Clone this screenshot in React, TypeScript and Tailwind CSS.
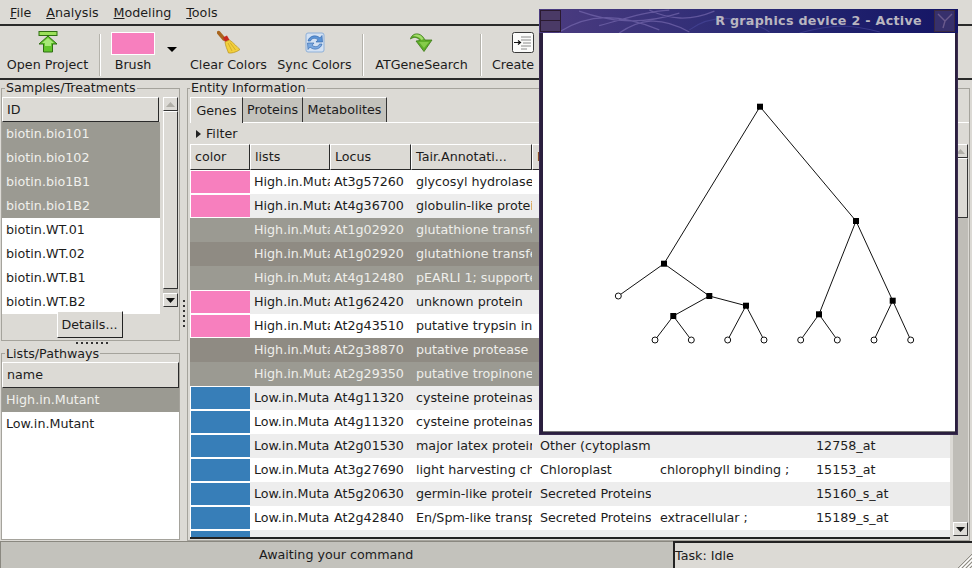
const samples = [
  { id: 'biotin.bio101', selected: true },
  { id: 'biotin.bio102', selected: true },
  { id: 'biotin.bio1B1', selected: true },
  { id: 'biotin.bio1B2', selected: true },
  { id: 'biotin.WT.01', selected: false },
  { id: 'biotin.WT.02', selected: false },
  { id: 'biotin.WT.B1', selected: false },
  { id: 'biotin.WT.B2', selected: false },
]

type Row = {
  swatch?: 'pink' | 'blue'
  selected?: boolean
  lists: string
  locus: string
  tair: string
  location?: string
  go?: string
  probe?: string
}

const rows: Row[] = [
  { swatch: 'pink', lists: 'High.in.Mutant', locus: 'At3g57260', tair: 'glycosyl hydrolase family' },
  { swatch: 'pink', lists: 'High.in.Mutant', locus: 'At4g36700', tair: 'globulin-like protein' },
  { selected: true, lists: 'High.in.Mutant', locus: 'At1g02920', tair: 'glutathione transferase' },
  { selected: true, lists: 'High.in.Mutant', locus: 'At1g02920', tair: 'glutathione transferase' },
  { selected: true, lists: 'High.in.Mutant', locus: 'At4g12480', tair: 'pEARLI 1; supported by' },
  { swatch: 'pink', lists: 'High.in.Mutant', locus: 'At1g62420', tair: 'unknown protein' },
  { swatch: 'pink', lists: 'High.in.Mutant', locus: 'At2g43510', tair: 'putative trypsin inhibitor' },
  { selected: true, lists: 'High.in.Mutant', locus: 'At2g38870', tair: 'putative protease inhibitor' },
  { selected: true, lists: 'High.in.Mutant', locus: 'At2g29350', tair: 'putative tropinone reductase' },
  { swatch: 'blue', lists: 'Low.in.Mutant', locus: 'At4g11320', tair: 'cysteine proteinase' },
  { swatch: 'blue', lists: 'Low.in.Mutant', locus: 'At4g11320', tair: 'cysteine proteinase' },
  { swatch: 'blue', lists: 'Low.in.Mutant', locus: 'At2g01530', tair: 'major latex protein', location: 'Other (cytoplasmic)', probe: '12758_at' },
  { swatch: 'blue', lists: 'Low.in.Mutant', locus: 'At3g27690', tair: 'light harvesting chlorophyll', location: 'Chloroplast', go: 'chlorophyll binding ;', probe: '15153_at' },
  { swatch: 'blue', lists: 'Low.in.Mutant', locus: 'At5g20630', tair: 'germin-like protein', location: 'Secreted Proteins', probe: '15160_s_at' },
  { swatch: 'blue', lists: 'Low.in.Mutant', locus: 'At2g42840', tair: 'En/Spm-like transposon', location: 'Secreted Proteins', go: 'extracellular ;', probe: '15189_s_at' },
  { swatch: 'blue', lists: 'Low.in.Mutant', locus: 'At2g21130', tair: 'peptidyl-prolyl isomerase', location: 'Other (cytoplasmic)', probe: '15200_at' },
]

const headerCell = 'flex h-full shrink-0 items-center border-t border-l border-t-white border-l-white border-r border-b border-r-[#2a2a2a] border-b-[#2a2a2a] bg-[#dcdad5] pl-[4px] overflow-hidden whitespace-nowrap'

const ScrollUp = () => (
  <div className="flex h-[14px] w-full items-center justify-center border-t border-l border-r border-b border-t-white border-l-white border-r-[#333] border-b-[#333] bg-[#dcdad5]">
    <svg width="9" height="5" viewBox="0 0 9 5"><path d="M0 5 L4.5 0 L9 5 Z" fill="#b0aea7" /></svg>
  </div>
)

const ScrollDown = () => (
  <div className="flex h-[14px] w-full items-center justify-center border-t border-l border-r border-b border-t-white border-l-white border-r-[#333] border-b-[#333] bg-[#dcdad5]">
    <svg width="9" height="5" viewBox="0 0 9 5"><path d="M0 0 L9 0 L4.5 5 Z" fill="#111" /></svg>
  </div>
)

const Separator = () => <div className="mt-[7px] h-[42px] w-[2px] shrink-0 border-l border-r border-l-[#b5b3ac] border-r-white" />

const OpenIcon = () => (
  <svg width="20" height="22" viewBox="0 0 20 22">
    <rect x="1" y="0.5" width="18" height="4" fill="#9be05a" stroke="#2f6f12" />
    <path d="M10 5 L19 13 L14.5 13 L14.5 21 L5.5 21 L5.5 13 L1 13 Z" fill="#62c52c" stroke="#2f6f12" />
    <path d="M10 7 L16 12 L13 12 L13 15 L7 15 L7 12 L4 12 Z" fill="#a8e878" />
  </svg>
)

const BroomIcon = () => (
  <svg width="24" height="24" viewBox="0 0 24 24">
    <path d="M1.5 2.5 L7 9" stroke="#a8651e" strokeWidth="3.5" strokeLinecap="round" />
    <path d="M6 7.5 L10 5.5 L12.5 10 L8 12 Z" fill="#c8281e" />
    <path d="M8 12 L12.5 10 C17 13 20 17 23 19.5 C19 22.5 14 23.5 11.5 23 C10 19 8.5 16 8 12 Z" fill="#f2cf3c" stroke="#b8921c" strokeWidth="0.7" />
    <path d="M11 13 L15 21 M13 12.5 L18.5 20" stroke="#c9a326" strokeWidth="0.8" />
  </svg>
)

const SyncIcon = () => (
  <svg width="20" height="21" viewBox="0 0 20 21">
    <rect x="1" y="1" width="18" height="19" rx="2" fill="#d3e1f3" stroke="#8fb0d8" />
    <path d="M3 9 C4 4 11 2 15 6 L17 3.5 L17.5 10 L11 10 L13 7.8 C10.5 5.5 6.5 6 5.5 9 Z" fill="#5c94d6" stroke="#2d62a8" strokeWidth="0.6" />
    <path d="M17 12 C16 17 9 19 5 15 L3 17.5 L2.5 11 L9 11 L7 13.2 C9.5 15.5 13.5 15 14.5 12 Z" fill="#7ba9e0" stroke="#2d62a8" strokeWidth="0.6" />
  </svg>
)

const GreenArrowIcon = () => (
  <svg width="23" height="20" viewBox="0 0 23 20">
    <path d="M0.5 7 C2 0.5 11 -0.5 15 8 L22 8 L14 19.5 L6 9 L10 8.5 C8 5 3.5 4.5 0.5 7 Z" fill="#5fae28" stroke="#3c7a18" strokeWidth="0.8" />
    <path d="M3 4 C6 1.5 11 2 13.5 7 L11.5 8 C9.5 5 6 4 3 4 Z" fill="#a4dc6c" />
    <path d="M9 10 L19 10 L14 16 Z" fill="#86cc4a" />
  </svg>
)

const CreateIcon = () => (
  <svg width="22" height="21" viewBox="0 0 22 21">
    <rect x="0.5" y="0.5" width="21" height="20" rx="2" fill="#fbfbfa" stroke="#3a3a3a" />
    <path d="M9 5 H19 M9 8 H19 M11 11 H19 M9 14 H19 M9 17 H15" stroke="#8a8a8a" strokeWidth="1" />
    <path d="M2 10.5 H8 M6 8.5 L8.5 10.5 L6 12.5" stroke="#111" strokeWidth="1.2" fill="none" />
  </svg>
)

const Dendrogram = () => {
  const edges = [
    [760, 106.7, 856, 221], [760, 106.7, 664, 263.7],
    [664, 263.7, 618.3, 296], [664, 263.7, 709.3, 296],
    [709.3, 296, 746, 305.7], [709.3, 296, 673.3, 316],
    [673.3, 316, 655, 340], [673.3, 316, 691.3, 340],
    [746, 305.7, 727.7, 340], [746, 305.7, 764, 340],
    [856, 221, 819, 314.3], [856, 221, 892.7, 300.7],
    [819, 314.3, 800.7, 340], [819, 314.3, 837.3, 340],
    [892.7, 300.7, 874, 340], [892.7, 300.7, 910.7, 340],
  ]
  const inner = [[760, 106.7], [856, 221], [664, 263.7], [709.3, 296], [746, 305.7], [673.3, 316], [819, 314.3], [892.7, 300.7]]
  const leaves = [[618.3, 296], [655, 340], [691.3, 340], [727.7, 340], [764, 340], [800.7, 340], [837.3, 340], [874, 340], [910.7, 340]]
  return (
    <svg className="h-full w-full" viewBox="543 33 412 398">
      {edges.map((e, i) => (
        <line key={i} x1={e[0]} y1={e[1]} x2={e[2]} y2={e[3]} stroke="#111" strokeWidth="1" />
      ))}
      {inner.map((p, i) => (
        <rect key={i} x={p[0] - 3} y={p[1] - 3} width="6" height="6" fill="#000" />
      ))}
      {leaves.map((p, i) => (
        <circle key={i} cx={p[0]} cy={p[1]} r="3" fill="#fff" stroke="#111" strokeWidth="1" />
      ))}
    </svg>
  )
}

const TitleTexture = () => (
  <svg className="absolute inset-0 h-full w-full" viewBox="0 0 418 23" preserveAspectRatio="none">
    <path d="M20 22 C50 4 80 4 120 20 M40 2 C70 12 100 16 140 4 M80 23 C100 10 120 6 150 22 M110 1 C130 10 150 12 175 2 M60 16 C90 8 110 2 130 1" stroke="#7a6cb0" strokeWidth="1.2" fill="none" opacity="0.65" />
    <path d="M150 20 C170 6 200 4 230 22 M260 23 C290 15 310 14 340 22" stroke="#4a4a9c" strokeWidth="1" fill="none" opacity="0.6" />
  </svg>
)

const App = () => {
  return (
    <div className="relative h-[568px] w-[972px] overflow-hidden bg-[#dcdad5] font-['DejaVu_Sans',sans-serif] text-[12.7px] text-[#1c1c1c]">
      {/* menu */}
      <div className="flex h-[26px] items-center gap-[15px] border-b-2 border-b-[#2a2a2a] pt-[2px] pl-[10px]">
        <span><u>F</u>ile</span>
        <span><u>A</u>nalysis</span>
        <span><u>M</u>odeling</span>
        <span><u>T</u>ools</span>
      </div>

      {/* toolbar */}
      <div className="flex h-[54px] border-b-2 border-b-[#2a2a2a] pl-[7px] pt-[1px]">
        <div className="flex w-[81px] shrink-0 flex-col items-center">
          <div className="flex h-[30px] items-center"><OpenIcon /></div>
          <span className="leading-[16px] whitespace-nowrap">Open Project</span>
        </div>
        <div className="ml-[11px]"><Separator /></div>
        <div className="ml-[10px] flex w-[44px] shrink-0 flex-col items-center">
          <div className="mt-[5px] h-[23px] w-[44px] border border-white bg-[#f77fbe]" />
          <span className="mt-[2px] leading-[16px]">Brush</span>
        </div>
        <div className="ml-[12px] mt-[20px] h-0 w-0 shrink-0 border-t-[5px] border-r-[5px] border-l-[5px] border-t-black border-r-transparent border-l-transparent" />
        <div className="ml-[13px] flex w-[77px] shrink-0 flex-col items-center">
          <div className="flex h-[30px] items-center"><BroomIcon /></div>
          <span className="leading-[16px] whitespace-nowrap">Clear Colors</span>
        </div>
        <div className="ml-[10px] flex w-[75px] shrink-0 flex-col items-center">
          <div className="flex h-[30px] items-center"><SyncIcon /></div>
          <span className="leading-[16px] whitespace-nowrap">Sync Colors</span>
        </div>
        <div className="ml-[10px]"><Separator /></div>
        <div className="ml-[10px] flex w-[95px] shrink-0 flex-col items-center">
          <div className="flex h-[30px] items-center"><GreenArrowIcon /></div>
          <span className="leading-[16px]">ATGeneSearch</span>
        </div>
        <div className="ml-[11px]"><Separator /></div>
        <div className="ml-[9px] flex w-[44px] shrink-0 flex-col items-center">
          <div className="flex h-[30px] items-center pl-[20px]"><CreateIcon /></div>
          <span className="leading-[16px]">Create</span>
        </div>
      </div>

      {/* main area */}
      <div className="flex h-[461px]">
        {/* left column */}
        <div className="flex w-[180px] shrink-0 flex-col">
          <div className="relative ml-[1px] mt-[8px] h-[253px] border border-[#a5a39c] pt-[8px]">
            <span className="absolute -top-[9px] left-[3px] bg-[#dcdad5] px-[1px] leading-[15px]">Samples/Treatments</span>
            <div className="flex h-[210px]">
              <div className="w-[158px] shrink-0">
                <div className={`${headerCell} !h-[25px] w-[157px]`}>ID</div>
                {samples.map((s) => (
                  <div
                    key={s.id}
                    className={`flex h-[24px] items-center pl-[4px] ${s.selected ? 'bg-[#9b9a92] text-[#f0f0ec]' : 'bg-white'}`}
                  >
                    {s.id}
                  </div>
                ))}
              </div>
              <div className="ml-[3px] flex h-[210px] w-[15px] flex-col bg-[#bfbdb7]">
                <ScrollUp />
                <div className="h-[178px] border-t border-l border-r border-b border-t-white border-l-white border-r-[#333] border-b-[#333] bg-[#dcdad5]" />
                <div className="flex-1" />
                <ScrollDown />
              </div>
            </div>
            <div className="mt-[4px] flex justify-center pr-[2px]">
              <button className="h-[27px] w-[66px] border-t border-l border-r border-b border-t-white border-l-white border-r-[#222] border-b-[#222] bg-[#dcdad5]">Details...</button>
            </div>
          </div>

          <div className="flex h-[12px] items-start justify-center gap-[3px] pt-[1px] pl-[4px]">
            {[0, 1, 2, 3, 4, 5, 6].map((i) => (
              <div key={i} className="h-[2px] w-[2px] bg-[#333]" />
            ))}
          </div>

          <div className="relative ml-[1px] h-[187px] border border-[#a5a39c] bg-white pt-[8px]">
            <div className="absolute inset-x-0 top-0 h-[8px] bg-[#dcdad5]" />
            <span className="absolute -top-[8px] left-[3px] bg-[#dcdad5] px-[1px] leading-[15px]">Lists/Pathways</span>
            <div className={`${headerCell} relative !h-[26px] w-[177px]`}>name</div>
            <div className="flex h-[24px] items-center bg-[#9b9a92] pl-[4px] text-[#f0f0ec]">High.in.Mutant</div>
            <div className="flex h-[24px] items-center pl-[4px]">Low.in.Mutant</div>
          </div>
        </div>

        {/* vertical splitter */}
        <div className="flex w-[7px] shrink-0 flex-col items-center gap-[3px] pt-[220px]">
          {[0, 1, 2, 3, 4, 5].map((i) => (
            <div key={i} className="h-[2px] w-[2px] bg-[#333]" />
          ))}
        </div>

        {/* right column */}
        <div className="relative mt-[8px] mr-[2px] h-[453px] min-w-0 flex-1 border border-[#a5a39c] pt-[8px] pl-[2px]">
          <span className="absolute -top-[9px] left-[2px] bg-[#dcdad5] px-[1px] leading-[15px]">Entity Information</span>

          {/* tabs */}
          <div className="flex h-[26px] border-b border-b-white">
            <div className="flex h-[26px] w-[53px] items-center justify-center border-t border-l border-r border-t-white border-l-white border-r-[#333] bg-[#dcdad5]">Genes</div>
            <div className="flex h-[25px] w-[60px] items-center justify-center border-t border-r border-t-white border-r-[#333] bg-[#c3c2bc]">Proteins</div>
            <div className="flex h-[25px] w-[84px] items-center justify-center border-t border-r border-t-white border-r-[#333] bg-[#c3c2bc]">Metabolites</div>
          </div>

          {/* filter */}
          <div className="flex h-[21px] items-center pl-[6px]">
            <div className="h-0 w-0 border-y-[4px] border-l-[5px] border-y-transparent border-l-[#222]" />
            <span className="ml-[5px]">Filter</span>
          </div>

          {/* table with scrollbar */}
          <div className="flex h-[395px]">
            <div className="h-full w-[760px] shrink-0 overflow-hidden border-b-2 border-b-[#222] bg-white">
              <div className="flex h-[26px]">
                <div className={`${headerCell} w-[60px]`}>color</div>
                <div className={`${headerCell} w-[80px]`}>lists</div>
                <div className={`${headerCell} w-[81px]`}>Locus</div>
                <div className={`${headerCell} w-[121px]`}>Tair.Annotati...</div>
                <div className={`${headerCell} flex-1`}>Localization</div>
              </div>
              {rows.map((r, i) => {
                const bg = r.selected
                  ? i % 2 === 1 ? 'bg-[#8f8b83] text-[#eeeeea]' : 'bg-[#9b9a92] text-[#eeeeea]'
                  : i % 2 === 1 ? 'bg-[#ededed]' : 'bg-white'
                return (
                  <div key={i} className={`flex h-[24px] items-center whitespace-nowrap ${bg}`}>
                    <div className={`flex h-full w-[60px] shrink-0 items-center py-[1px] pl-[1px] ${r.swatch ? 'bg-white' : ''}`}>
                      {r.swatch && (
                        <div className={`h-full w-full ${r.swatch === 'pink' ? 'bg-[#f77fbe]' : 'bg-[#377eb8]'}`} />
                      )}
                    </div>
                    <div className="w-[80px] shrink-0 overflow-hidden pl-[4px]">{r.lists}</div>
                    <div className="w-[81px] shrink-0 overflow-hidden pl-[4px]">{r.locus}</div>
                    <div className="w-[125px] shrink-0 pr-[4px] pl-[5px]">
                      <div className="overflow-hidden">{r.tair}</div>
                    </div>
                    <div className="w-[120px] shrink-0 pr-[5px] pl-[4px]">
                      <div className="overflow-hidden">{r.location}</div>
                    </div>
                    <div className="w-[156px] shrink-0 overflow-hidden pl-[4px]">{r.go}</div>
                    <div className="flex-1 overflow-hidden pl-[4px]">{r.probe}</div>
                  </div>
                )
              })}
            </div>
            <div className="ml-[3px] flex h-[392px] w-[15px] flex-col bg-[#bfbdb7]">
              <ScrollUp />
              <div className="h-[60px] border-t border-l border-r border-b border-t-white border-l-white border-r-[#333] border-b-[#333] bg-[#dcdad5]" />
              <div className="flex-1" />
              <ScrollDown />
            </div>
          </div>
        </div>
      </div>

      {/* status bar */}
      <div className="flex h-[27px]">
        <div className="flex w-[673px] shrink-0 items-center border-t border-l border-t-[#8a8880] border-l-[#8a8880] bg-[#c3c2bc] pl-[258px]">Awaiting your command</div>
        <div className="relative flex flex-1 items-center border-t-2 border-l-2 border-t-[#222] border-l-[#222] bg-[#dcdad5] text-[#1c1c1c]">
          <span>Task: Idle</span>
          <svg className="absolute right-0 bottom-0" width="15" height="15" viewBox="0 0 15 15">
            <path d="M15 1 L1 15 M15 5 L5 15 M15 9 L9 15 M15 13 L13 15" stroke="#8f8d86" strokeWidth="1" />
            <path d="M15 3 L3 15 M15 7 L7 15 M15 11 L11 15" stroke="#ffffff" strokeWidth="1" />
          </svg>
        </div>
      </div>

      {/* R graphics window floating above the app */}
      <div className="absolute top-[9px] left-[539px] flex h-[426px] w-[419px] flex-col bg-[#2a1f3e] shadow-[inset_0_0_0_1px_#3a2b50]">
        <div className="relative flex h-[24px] shrink-0 items-center bg-gradient-to-r from-[#4c3c80] via-[#2a2a74] to-[#141464]">
          <TitleTexture />
          <div className="relative ml-[1px] h-[22px] w-[21px] border border-[#2a1a30] bg-[#4a3a66]">
            <div className="mt-[9px] h-px w-full bg-[#2a1a30]" />
          </div>
          <span className="relative ml-auto font-bold tracking-[0.3px] whitespace-nowrap text-[#b9b6c0]">R graphics device 2 - Active</span>
          <div className="relative mr-[3px] ml-[12px] flex h-[22px] w-[21px] items-center justify-center border border-[#3a2a40] bg-[#37306c]">
            <svg width="18" height="18" viewBox="0 0 18 18">
              <path d="M2 2 L9 9 L16 2 M9 9 L7 16" stroke="#6a5a8c" strokeWidth="1.4" fill="none" />
            </svg>
          </div>
        </div>
        <div className="mr-[3px] mb-[3px] ml-[4px] flex-1 border-b border-b-[#777] bg-white">
          <Dendrogram />
        </div>
      </div>
    </div>
  )
}

export default App
